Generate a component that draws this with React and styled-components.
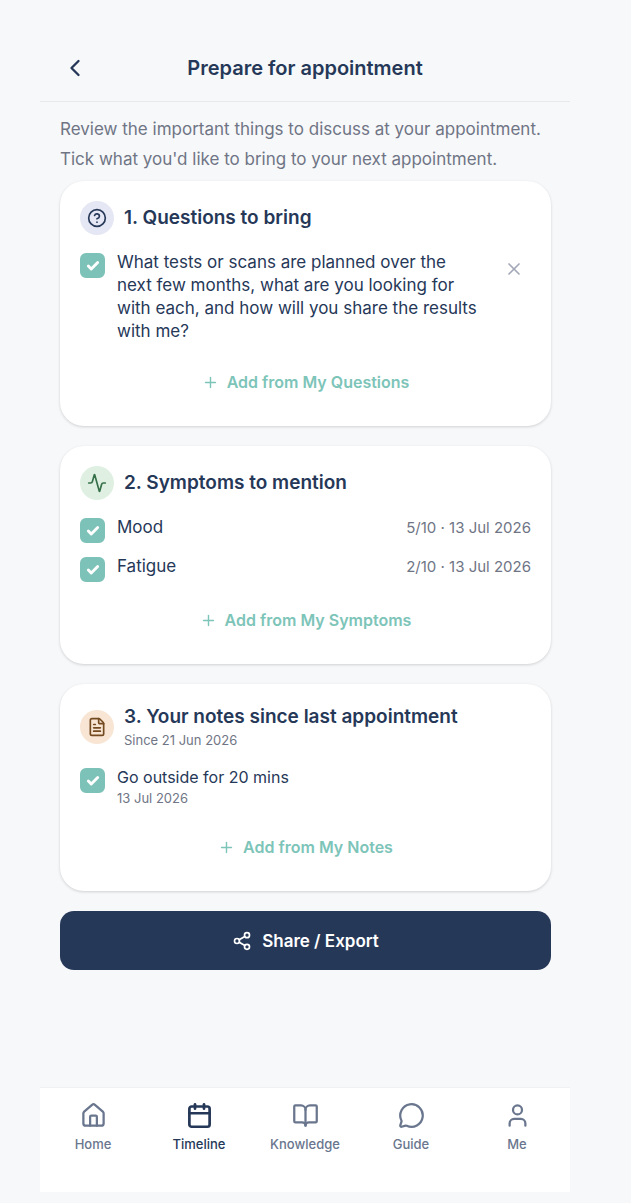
import React, { useState } from "react";
import styled, { createGlobalStyle } from "styled-components";
import {
  Activity,
  BookOpen,
  Calendar,
  Check,
  ChevronLeft,
  CircleHelp,
  FileText,
  House,
  MessageCircle,
  Plus,
  Share2,
  User,
  X,
} from "lucide-react";

const GlobalStyle = createGlobalStyle`
  * {
    box-sizing: border-box;
  }

  body {
    margin: 0;
    background-color: #f7f8fa;
    color: #263858;
    font-family: Inter, "Liberation Sans", sans-serif;
  }

  button {
    font-family: inherit;
    border: none;
    cursor: pointer;
  }
`;

const Screen = styled.div`
  min-height: 100vh;
  padding: 34px 61px 11px 40px;
  display: flex;
  flex-direction: column;
`;

const Header = styled.header`
  height: 68px;
  padding: 0 20px;
  border-bottom: 1px solid #e7e9ec;
  display: grid;
  grid-template-columns: 30px 1fr 30px;
  align-items: center;
`;

const BackButton = styled.button`
  height: 30px;
  padding: 0;
  background: none;
  color: #263858;
  display: grid;
  place-items: center;
`;

const Title = styled.h1`
  margin: 0;
  font-size: 20px;
  font-weight: 600;
  line-height: 26px;
  text-align: center;
`;

const Main = styled.main`
  padding: 12px 19px 20px 20px;
  display: flex;
  flex-direction: column;
  gap: 20px;
`;

const Intro = styled.p`
  margin: 0 0 -13px;
  color: #6f7585;
  font-size: 17px;
  line-height: 30px;
`;

const Card = styled.section`
  padding: 20px;
  border-radius: 24px;
  background-color: white;
  box-shadow: 0 1px 3px rgba(0, 0, 0, 0.16);
`;

const CardHeader = styled.div`
  margin-bottom: 16px;
  display: flex;
  align-items: center;
  gap: 10px;
`;

const IconCircle = styled.span`
  width: 34px;
  height: 34px;
  border-radius: 50%;
  background-color: ${(props) => props.$bg};
  color: ${(props) => props.$color};
  display: grid;
  place-items: center;
`;

const CardTitle = styled.h2`
  margin: 0;
  font-size: 19px;
  font-weight: 600;
  line-height: 26px;
`;

const Since = styled.div`
  color: #6f7585;
  font-size: 13px;
  line-height: 20px;
`;

const List = styled.ul`
  margin: 0;
  padding: 0;
  list-style: none;
  display: grid;
  gap: 12px;
`;

const Row = styled.li`
  display: flex;
  align-items: flex-start;
`;

const RowLabel = styled.label`
  flex: 1;
  display: flex;
  align-items: flex-start;
  gap: 12px;
  cursor: pointer;
`;

const CheckWrap = styled.span`
  margin-top: 2px;
  display: grid;
  place-items: center;
  color: white;

  > * {
    grid-area: 1 / 1;
  }

  svg {
    pointer-events: none;
  }
`;

const CheckInput = styled.input`
  appearance: none;
  width: 25px;
  height: 25px;
  margin: 0;
  border: 2px solid #7dc2b8;
  border-radius: 6px;
  cursor: pointer;

  &:checked {
    background-color: #7dc2b8;
  }
`;

const RowText = styled.span`
  padding-bottom: 1px;
  font-size: ${(props) => (props.$small ? 16 : 17)}px;
  line-height: 23px;
`;

const RowDate = styled.span`
  display: block;
  color: #6f7585;
  font-size: 13px;
  line-height: 19px;
`;

const Score = styled.span`
  color: #6f7585;
  font-size: 15px;
  line-height: 23px;
`;

const RemoveButton = styled.button`
  width: 34px;
  height: 36px;
  margin-left: 16px;
  padding: 0;
  background: none;
  color: #a3a8b8;
  display: grid;
  place-items: center;
`;

const AddButton = styled.button`
  width: 100%;
  height: 48px;
  margin-top: 14px;
  padding: 0;
  background: none;
  color: #7dc4b9;
  font-size: 16px;
  font-weight: 600;
  display: flex;
  align-items: center;
  justify-content: center;
  gap: 8px;
`;

const ShareButton = styled.button`
  height: 59px;
  border-radius: 14px;
  background-color: #263858;
  color: white;
  font-size: 17px;
  font-weight: 600;
  display: flex;
  align-items: center;
  justify-content: center;
  gap: 10px;
`;

const Nav = styled.nav`
  height: 105px;
  margin-top: auto;
  padding-top: 14px;
  border-top: 1px solid #f0f1f3;
  background-color: white;
  display: grid;
  grid-template-columns: repeat(5, 1fr);
`;

const NavLink = styled.a`
  color: ${(props) => (props.$active ? "#263858" : "#69768e")};
  font-size: 13px;
  font-weight: 500;
  line-height: 18px;
  text-decoration: none;
  display: flex;
  flex-direction: column;
  align-items: center;
  gap: 6px;
`;

const navItems = [
  { name: "Home", icon: House },
  { name: "Timeline", icon: Calendar, active: true },
  { name: "Knowledge", icon: BookOpen },
  { name: "Guide", icon: MessageCircle },
  { name: "Me", icon: User },
];

const symptoms = [
  { name: "Mood", score: "5/10 · 13 Jul 2026" },
  { name: "Fatigue", score: "2/10 · 13 Jul 2026" },
];

const CheckRow = ({ children, extra, small }) => {
  const [checked, setChecked] = useState(true);

  return (
    <Row>
      <RowLabel>
        <CheckWrap>
          <CheckInput type="checkbox" checked={checked} onChange={() => setChecked(!checked)} />
          {checked && <Check size={14} strokeWidth={5} />}
        </CheckWrap>
        <RowText $small={small}>{children}</RowText>
      </RowLabel>
      {extra}
    </Row>
  );
};

const Add = ({ children }) => (
  <AddButton type="button">
    <Plus size={17} strokeWidth={2} />
    {children}
  </AddButton>
);

export default () => (
  <>
    <GlobalStyle />
    <Screen>
      <Header>
        <BackButton type="button" aria-label="Back">
          <ChevronLeft size={28} strokeWidth={2} />
        </BackButton>
        <Title>Prepare for appointment</Title>
      </Header>
      <Main>
        <Intro>
          Review the important things to discuss at your appointment. Tick what you'd like to bring
          to your next appointment.
        </Intro>

        <Card>
          <CardHeader>
            <IconCircle $bg="#e5e7f4" $color="#263858">
              <CircleHelp size={20} strokeWidth={2} />
            </IconCircle>
            <CardTitle>1. Questions to bring</CardTitle>
          </CardHeader>
          <List>
            <CheckRow
              extra={
                <RemoveButton type="button" aria-label="Remove question">
                  <X size={20} strokeWidth={2} />
                </RemoveButton>
              }
            >
              What tests or scans are planned over the next few months, what are you looking for
              with each, and how will you share the results with me?
            </CheckRow>
          </List>
          <Add>Add from My Questions</Add>
        </Card>

        <Card>
          <CardHeader>
            <IconCircle $bg="#dff0e2" $color="#357049">
              <Activity size={20} strokeWidth={2} />
            </IconCircle>
            <CardTitle>2. Symptoms to mention</CardTitle>
          </CardHeader>
          <List>
            {symptoms.map((symptom) => (
              <CheckRow key={symptom.name} extra={<Score>{symptom.score}</Score>}>
                {symptom.name}
              </CheckRow>
            ))}
          </List>
          <Add>Add from My Symptoms</Add>
        </Card>

        <Card>
          <CardHeader>
            <IconCircle $bg="#f8e5d3" $color="#744a20">
              <FileText size={20} strokeWidth={2} />
            </IconCircle>
            <div>
              <CardTitle>3. Your notes since last appointment</CardTitle>
              <Since>Since 21 Jun 2026</Since>
            </div>
          </CardHeader>
          <List>
            <CheckRow small>
              Go outside for 20 mins
              <RowDate>13 Jul 2026</RowDate>
            </CheckRow>
          </List>
          <Add>Add from My Notes</Add>
        </Card>

        <ShareButton type="button">
          <Share2 size={20} strokeWidth={2} />
          Share / Export
        </ShareButton>
      </Main>

      <Nav>
        {navItems.map(({ name, icon: Icon, active }) => (
          <NavLink key={name} href="#" $active={active} aria-current={active ? "page" : undefined}>
            <Icon size={27} strokeWidth={active ? 2.4 : 2} />
            {name}
          </NavLink>
        ))}
      </Nav>
    </Screen>
  </>
);
